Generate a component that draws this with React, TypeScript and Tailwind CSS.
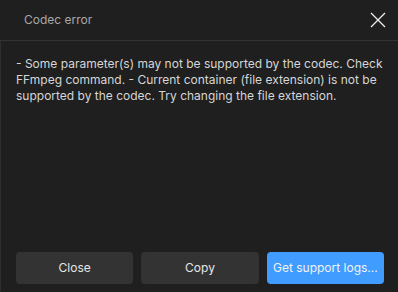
import React from "react";

export default function App() {
  return (
    <div
      className="w-[398px] h-[292px] bg-[#1f1f1f] flex flex-col text-[12px]"
      style={{ fontFamily: "Inter, 'Noto Sans', sans-serif" }}
    >
      <div className="h-[41px] flex items-center justify-between pl-[24px] pr-[10px] border-b border-[#333]">
        <span className="text-[#a8a8a8]">Codec error</span>
        <button className="w-[20px] h-[20px] flex items-center justify-center text-[#eee]">
          <svg width="16" height="16" viewBox="0 0 16 16" fill="none" stroke="currentColor" strokeWidth="1.3">
            <path d="M1 1L15 15M15 1L1 15" />
          </svg>
        </button>
      </div>
      <div className="flex-1 flex flex-col border-l border-[#2e2e2e] pl-[15px] pr-[14px]">
        <p className="mt-[15px] leading-[16px] text-[#d6d6d6]">
          - Some parameter(s) may not be supported by the codec. Check FFmpeg command. - Current container (file extension) is not be supported by the codec. Try changing the file extension.
        </p>
        <div className="mt-auto mb-[8px] grid grid-cols-3 gap-[8px]">
          <button className="h-[32px] rounded-[4px] bg-[#333] text-[#e6e6e6]">Close</button>
          <button className="h-[32px] rounded-[4px] bg-[#333] text-[#e6e6e6]">Copy</button>
          <button className="h-[32px] rounded-[4px] bg-[#409cff] text-[#f2f2f2]">Get support logs...</button>
        </div>
      </div>
    </div>
  );
}
